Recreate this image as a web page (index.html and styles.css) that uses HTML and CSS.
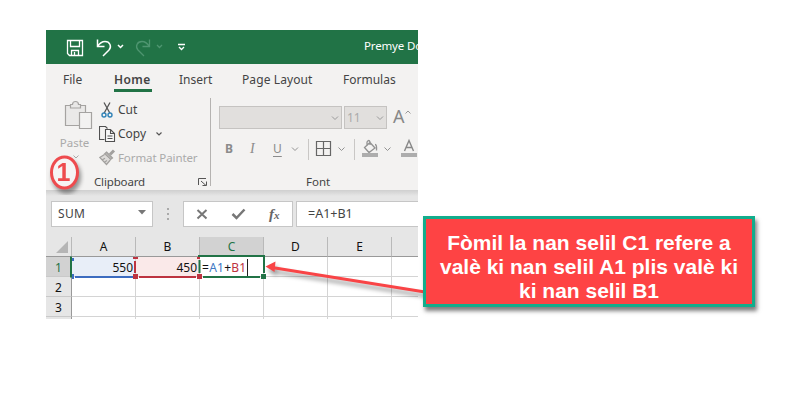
FILE: index.html
```html
<!DOCTYPE html>
<html lang="ht">
<head>
<meta charset="utf-8">
<title>Premye Do</title>
<link rel="stylesheet" href="styles.css">
</head>
<body>
<main class="app">
  <header class="titlebar">
    <svg class="quick" width="150" height="34" viewBox="0 0 150 34" fill="none" stroke="#fff" stroke-width="1.3">
      <path d="M21.500 10.500h15v15h-13l-2-2zM24.500 10.500v6h9v-6M25.500 25.500v-5h7v5M28.500 22v3"/>
      <path d="M51.500 9.500v7h7M51.500 16.500c2-3 4-5 7.500-5 5 0 7 5 4 8.500l-6 6" stroke-width="1.500"/>
      <path d="M72 15l2.500 2.500L77 15" stroke-width="1.500"/>
      <g stroke="#4e9570"><path d="M103.500 9.500v7h-7M103.500 16.500c-2-3-4-5-7.500-5-5 0-7 5-4 8.500l6 6"/><path d="M111 15l2.500 2.500L116 15"/></g>
      <path d="M132 14.500h7M133 17l2.500 2.500L138 17"/>
    </svg>
    <span class="doc">Premye Do</span>
  </header>
  <nav class="tabs">
    <span class="tab file">File</span><span class="tab home"><b>Home</b></span><span class="tab insert">Insert</span><span class="tab layout">Page Layout</span><span class="tab formulas">Formulas</span>
  </nav>
  <section class="ribbon">
    <div class="clipboard">
      <div class="tools">
        <div class="paste">
          <svg width="30" height="34" viewBox="0 0 30 34" fill="none" stroke="#a5a3a1" stroke-width="1.200">
            <path d="M7.500 7.500h-5v20h20v-20h-5" fill="#eae9e8"/>
            <path d="M7.500 10V6.500h2c0-4 6-4 6 0h2V10z" fill="#e9e8e7"/>
            <path d="M16.500 14.500h12v16h-12z" fill="#f3f2f1"/>
          </svg>
          <span class="label">Paste</span>
          <svg width="8" height="6" viewBox="0 0 8 6" fill="none" stroke="#aaa"><path d="M1.500 1.500L4 4l2.500-2.500"/></svg>
        </div>
        <div class="commands">
          <div class="command">
            <svg width="19" height="18" viewBox="0 0 19 18" fill="none"><path d="M5 1.500l5.800 10.500M11 1.500L5.200 12" stroke="#555" stroke-width="1.300"/><circle cx="5" cy="14" r="2" stroke="#3183b7" stroke-width="1.400"/><circle cx="11" cy="14" r="2" stroke="#3183b7" stroke-width="1.400"/></svg>
            <span>Cut</span>
          </div>
          <div class="command">
            <svg width="19" height="18" viewBox="0 0 19 18" fill="none" stroke="#505050" stroke-width="1.100"><path d="M5.500 14.500h-5v-13h6l2 2"/><path d="M6.500 4.500h5l4 4v8h-9zM11.500 4.500v4h4M8.500 11h5M8.500 13.500h5" fill="#f8f8f8"/></svg>
            <span>Copy</span>
            <svg class="more" width="8" height="6" viewBox="0 0 8 6" fill="none" stroke="#555" stroke-width="1.200"><path d="M1.500 1.500L4 4l2.500-2.500"/></svg>
          </div>
          <div class="command disabled">
            <svg width="19" height="18" viewBox="0 0 19 18" fill="none" stroke="#a2a09e" stroke-width="1.200"><path d="M15 1.500L11 5.500" stroke-width="3"/><path d="M7.500 3l6 6-2 1.500-6-5.500z" fill="#b4b2b0"/><path d="M5.500 5.500L.8 8.500l6.700 7 3.800-4.500M3 11l3-1.800M5 13.500l3-2" fill="#dddbd9"/></svg>
            <span class="painter">Format Painter</span>
          </div>
        </div>
      </div>
      <div class="caption"><span class="cliptext">Clipboard</span>
        <svg width="10" height="10" viewBox="0 0 10 10" fill="none" stroke="#555"><path d="M.5 8V1.500H8M3 4l5 4.500M8.500 4.500v4h-4"/></svg>
      </div>
    </div>
    <div class="font">
      <div class="selects">
        <div class="select family"><svg width="8" height="6" viewBox="0 0 8 6" fill="none" stroke="#999"><path d="M1 1.500l3 3 3-3"/></svg></div>
        <div class="select size"><span>11</span><svg width="8" height="6" viewBox="0 0 8 6" fill="none" stroke="#999"><path d="M1 1.500l3 3 3-3"/></svg></div>
        <span class="grow">A</span><svg class="caret" width="6" height="4" viewBox="0 0 6 4" fill="none" stroke="#999"><path d="M.5 3.500L3 1l2.500 2.500"/></svg>
      </div>
      <div class="formats">
        <b class="bold">B</b><i class="italic">I</i><span class="under">U</span>
        <svg width="127" height="24" viewBox="291 136 127 24" fill="none" stroke="#929292">
          <path d="M292 147.500l3 3 3-3M338.500 147.500l3 3 3-3M384.500 147.500l3 3 3-3"/>
          <path d="M308.500 139v21M354.500 139v21" stroke="#c9c7c5"/>
          <path d="M316.500 141.500h14v14h-14zM323.500 141.500v14M316.500 148.500h14" stroke="#666" stroke-width="1.200"/>
          <path d="M370 142.500l5 5.500-6 4.500-4.500-5zM367 146v-4q2-3 3 0v3M375 144.500q2 0 1.500 6" stroke-width="1.300"/>
          <path d="M362 153h16v4h-16zM401 153h16v4h-16z" fill="#adadad" stroke="none"/>
          <path d="M404.500 151l4.500-10.500 4.500 10.500M406 147.500h6" stroke="#888" stroke-width="1.400"/>
        </svg>
      </div>
      <div class="fonttext">Font</div>
    </div>
  </section>
  <section class="formula">
    <div class="namebox"><span>SUM</span><svg width="8" height="5" viewBox="0 0 8 5"><path d="M0 0h8L4 4.500z" fill="#777"/></svg></div>
    <svg width="30" height="26" viewBox="0 0 30 26"><path d="M14 7h2v2h-2zM14 12h2v2h-2zM14 17h2v2h-2z" fill="#aaa"/></svg>
    <div class="actions">
      <svg width="64" height="24" viewBox="0 0 64 24" fill="none" stroke="#777" stroke-width="2"><path d="M13.500 8l9 8.500M22.500 8l-9 8.500"/><path d="M48.500 12l4 4 8-8.500" stroke-width="2.500"/></svg>
      <span class="fx">f<small>x</small></span>
    </div>
    <div class="input">=A1+B1</div>
  </section>
  <section class="sheet">
    <div class="row head"><div class="corner"><svg width="12" height="12" viewBox="0 0 12 12"><path d="M12 0v12H0z" fill="#b5b5b5"/></svg></div><div>A</div><div>B</div><div class="active">C</div><div>D</div><div>E</div><div></div></div>
    <div class="row"><div class="number current">1</div><div class="value blue">550</div><div class="value red">450</div><div class="edit">=<span class="refa">A1</span>+<span class="refb">B1</span></div><div></div><div></div><div></div></div>
    <div class="row"><div class="number">2</div><div></div><div></div><div></div><div></div><div></div><div></div></div>
    <div class="row"><div class="number">3</div><div></div><div></div><div></div><div></div><div></div><div></div></div>
    <div class="row"><div class="number"></div><div></div><div></div><div></div><div></div><div></div><div></div></div>
  </section>
</main>
<svg class="selection" width="220" height="32" viewBox="66 252 220 32" fill="none">
  <path d="M71 256.500v21" stroke="#217346" stroke-width="2"/>
  <path d="M75 277h58" stroke="#3c6cc0" stroke-width="2"/>
  <path d="M72 258h2v3h-2zM72 274h2v5h-2z" fill="#3c6cc0"/>
  <path d="M139 277h57" stroke="#bd3340" stroke-width="2"/>
  <path d="M135 261v12" stroke="#bd3340" stroke-width="2"/>
  <path d="M133 257h5v2h-5zM133 274h5v5h-5zM197 257h3v2h-3zM197 274h5v5h-5z" fill="#bd3340"/>
  <path d="M198 256h66v17M199.500 260v13M203 277h57" stroke="#217346" stroke-width="2"/>
  <path d="M261 274h5v5h-5z" fill="#217346"/>
  <path d="M247.500 259v17" stroke="#222"/>
</svg>
<svg class="arrow" width="180" height="50" viewBox="255 255 180 50">
  <g class="shadow"><path d="M272 267.500L425 292" stroke="#f94446" stroke-width="3"/><path d="M265.500 266.500l10-5-1 10.500z" fill="#f94446"/></g>
</svg>
<svg class="badge" width="40" height="44" viewBox="45 151 40 44"><g class="shadow"><ellipse cx="64.500" cy="172.500" rx="13" ry="15.500" fill="#f6f4f4" stroke="#ee4b4e" stroke-width="3"/><text x="63.500" y="181" text-anchor="middle">1</text></g></svg>
<aside class="callout">Fòmil la nan selil C1 refere a<br>valè ki nan selil A1 plis valè ki<br>ki nan selil B1</aside>
</body>
</html>
```
FILE: styles.css
```css
* { box-sizing: border-box; }
body { margin: 0; width: 812px; height: 401px; overflow: hidden; position: relative; background: #fff; font: 12px/16px "Noto Sans", "Open Sans", sans-serif; color: #444; }
svg { display: block; flex: none; }
.app { width: 372px; height: 289px; margin: 30px 0 0 46px; overflow: hidden; background: #e6e6e6; }
.titlebar { height: 34px; display: flex; align-items: center; background: #217346; color: #fff; overflow: hidden; }
.doc { margin-left: 168px; white-space: nowrap; font-size: 11.500px; letter-spacing: -.15px; margin-top: -2px; }
.tabs { height: 30px; display: flex; padding-left: 17px; background: #f3f2f1; white-space: nowrap; }
.tab { height: 28px; line-height: 31px; }
.file { width: 51px; }
.home { width: 65px; }
.home b { display: block; width: 38px; height: 28px; border-bottom: 3px solid #217346; font-weight: 600; letter-spacing: .4px; }
.insert { width: 63px; }
.layout { width: 101px; letter-spacing: .1px; }
.ribbon { height: 96px; display: flex; background: #f3f2f1; }
.clipboard { width: 165px; height: 92px; padding-top: 4px; background: linear-gradient(#b5b3b1, #b5b3b1) right 4px / 1px 88px no-repeat; }
.tools { display: flex; height: 76px; }
.paste { width: 53px; padding: 0 0 0 13px; display: flex; flex-direction: column; align-items: center; color: #aaa; }
.paste svg { margin-left: -2px; }
.paste svg:last-child { margin: 4px 0 0 -6px; }
.label { margin-left: -9px; height: 18px; line-height: 22px; font-size: 11.500px; }
.commands { display: flex; flex-direction: column; }
.command { height: 24px; display: flex; align-items: center; white-space: nowrap; }
.disabled { color: #aaa; }
.more { margin-left: 9px; }
.painter { font-size: 11.500px; letter-spacing: -.1px; }
.caption { display: flex; align-items: center; height: 16px; line-height: 16px; padding-left: 48px; }
.cliptext { width: 104px; font-size: 11.500px; letter-spacing: -.15px; }
.font { width: 207px; padding: 12px 0 0 8px; }
.selects { display: flex; height: 24px; }
.select { height: 23px; display: flex; align-items: center; justify-content: flex-end; padding-right: 2px; border: 1px solid #c5c3c1; background: #e1dfdd; }
.family { width: 123px; }
.size { width: 43px; margin-left: 2px; color: #aaa; justify-content: space-between; padding-left: 2px; }
.grow { margin-left: 6px; font-size: 18px; line-height: 20px; color: #888; }
.caret { margin-top: 4px; }
.formats { height: 25px; margin-top: 6px; display: flex; color: #8b8b8b; line-height: 25px; }
.bold { width: 24px; padding-left: 6px; }
.italic { width: 23px; padding-left: 7px; font-family: "Liberation Serif", serif; font-size: 14px; }
.under { width: 25px; padding-left: 7px; text-decoration: underline; text-underline-offset: 3px; }
.fonttext { padding-left: 87px; margin-top: 13px; font-size: 11.500px; }
.formula { height: 47px; display: flex; padding: 11px 0 0 5px; background: linear-gradient(#cfcfcf, #e6e6e6 6px); }
.namebox, .actions, .input { height: 26px; border: 1px solid #c6c6c6; background: #fff; display: flex; align-items: center; }
.namebox { width: 102px; padding: 0 6px; justify-content: space-between; letter-spacing: .3px; }
.namebox svg { margin-top: -3px; }
.actions { width: 110px; overflow: hidden; }
.fx { margin-left: 21px; font: italic bold 15px/20px "Liberation Serif", serif; color: #666; }
.fx small { font-size: 11px; }
.input { width: 122px; margin-left: 3px; padding-left: 11px; border-right: 0; font-size: 12.500px; }
.sheet { background: #fff; color: #111; }
.row { display: grid; grid-template-columns: 26px repeat(5, 64px) 26px; height: 20px; width: 372px; overflow: hidden; }
.row > div { height: 20px; border-right: 1px solid #d4d4d4; border-bottom: 1px solid #d4d4d4; line-height: 21px; }
.head > div { text-align: center; background: #e6e6e6; border-right-color: #b9b9b9; border-bottom-color: #999; line-height: 20px; }
.row > div:last-child { border-right: 0; }
.head > .corner { display: flex; justify-content: flex-end; align-items: flex-end; padding: 0 3px 3px 0; }
.head > .active { background: #d2d2d2; color: #217346; }
.row > .number { background: #e6e6e6; text-align: center; border-right-color: #999; border-bottom-color: #c9c9c9; }
.row > .current { background: #d2d2d2; color: #217346; }
.row > .value { text-align: right; padding-right: 2px; }
.row > .blue { background: #e8eef8; }
.row > .red { background: #fae9e9; }
.row > .edit { padding-left: 2px; letter-spacing: .25px; }
.refa { color: #4078c4; }
.refb { color: #bd3340; }
.selection { position: absolute; left: 66px; top: 252px; }
.arrow { position: absolute; left: 255px; top: 255px; }
.badge { position: absolute; left: 45px; top: 151px; }
.badge text { font: bold 25px "Liberation Sans", Arial, sans-serif; fill: #ee4b4e; }
.shadow { filter: drop-shadow(2px 4px 2px rgba(0, 0, 0, .4)); }
.callout { position: absolute; left: 423px; top: 216px; width: 332px; height: 91px; padding-top: 12px; border: 3px solid #12ad8c; background: #fe4344; color: #fff; text-align: center; font: bold 21px/24px "Liberation Sans", Arial, sans-serif; box-shadow: 2px 4px 4px rgba(0, 0, 0, .5); white-space: nowrap; }
```
